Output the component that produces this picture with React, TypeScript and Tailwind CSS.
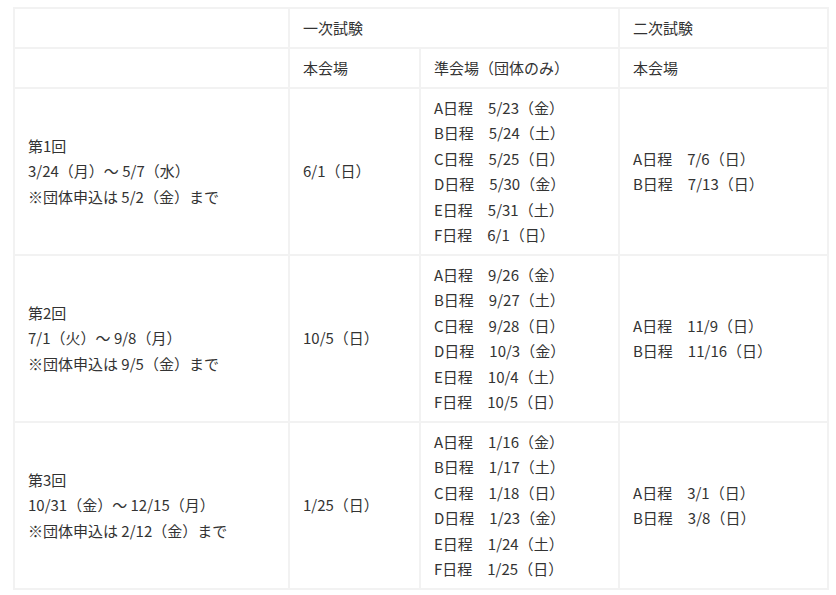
const rounds = [
  {
    title: '第1回',
    period: '3/24（月）～ 5/7（水）',
    note: '※団体申込は 5/2（金）まで',
    main: '6/1（日）',
    sub: ['A日程　5/23（金）', 'B日程　5/24（土）', 'C日程　5/25（日）', 'D日程　5/30（金）', 'E日程　5/31（土）', 'F日程　6/1（日）'],
    second: ['A日程　7/6（日）', 'B日程　7/13（日）'],
  },
  {
    title: '第2回',
    period: '7/1（火）～ 9/8（月）',
    note: '※団体申込は 9/5（金）まで',
    main: '10/5（日）',
    sub: ['A日程　9/26（金）', 'B日程　9/27（土）', 'C日程　9/28（日）', 'D日程　10/3（金）', 'E日程　10/4（土）', 'F日程　10/5（日）'],
    second: ['A日程　11/9（日）', 'B日程　11/16（日）'],
  },
  {
    title: '第3回',
    period: '10/31（金）～ 12/15（月）',
    note: '※団体申込は 2/12（金）まで',
    main: '1/25（日）',
    sub: ['A日程　1/16（金）', 'B日程　1/17（土）', 'C日程　1/18（日）', 'D日程　1/23（金）', 'E日程　1/24（土）', 'F日程　1/25（日）'],
    second: ['A日程　3/1（日）', 'B日程　3/8（日）'],
  },
];

const cell = 'border-2 border-[#f2f2f2] px-[13px] py-[6px] align-middle text-left font-normal';

export default function App() {
  return (
    <div
      className="bg-white pl-[13px] pt-[7px] text-[15px] leading-[25.5px] text-[#333]"
      style={{ fontFamily: '"Noto Sans CJK JP", "Noto Sans", sans-serif' }}
    >
      <table className="table-fixed border-collapse w-[814px]">
        <colgroup>
          <col className="w-[275px]" />
          <col className="w-[131px]" />
          <col className="w-[199px]" />
          <col className="w-[209px]" />
        </colgroup>
        <thead>
          <tr className="h-[40px]">
            <th className={cell}></th>
            <th className={cell} colSpan={2}>一次試験</th>
            <th className={cell}>二次試験</th>
          </tr>
          <tr className="h-[39px]">
            <th className={cell}></th>
            <th className={cell}>本会場</th>
            <th className={cell}>準会場（団体のみ）</th>
            <th className={cell}>本会場</th>
          </tr>
        </thead>
        <tbody>
          {rounds.map((r) => (
            <tr key={r.title} className="h-[167px]">
              <td className={cell}>
                <div>{r.title}</div>
                <div>{r.period}</div>
                <div>{r.note}</div>
              </td>
              <td className={cell}>{r.main}</td>
              <td className={cell}>
                {r.sub.map((s) => (
                  <div key={s}>{s}</div>
                ))}
              </td>
              <td className={cell}>
                {r.second.map((s) => (
                  <div key={s}>{s}</div>
                ))}
              </td>
            </tr>
          ))}
        </tbody>
      </table>
    </div>
  );
}
